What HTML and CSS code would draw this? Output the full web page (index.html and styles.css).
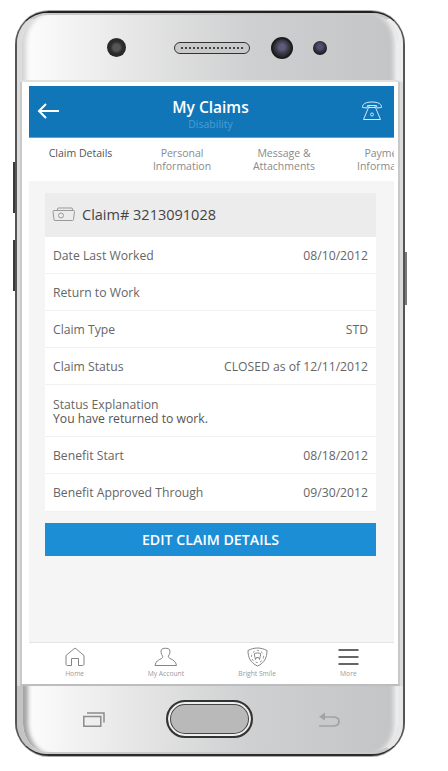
FILE: index.html
```html
<!DOCTYPE html>
<html lang="en">
<head>
<meta charset="utf-8">
<title>My Claims</title>
<link rel="stylesheet" href="styles.css">
</head>
<body>
<div class="phone">
  <span class="side side-l1"></span>
  <span class="side side-l2"></span>
  <span class="side side-r"></span>
  <div class="bezel bezel-top">
    <span class="cam-left"></span>
    <span class="speaker"><i></i></span>
    <span class="cam-main"></span>
    <span class="cam-small"></span>
  </div>
  <div class="screen">
    <header class="appbar">
      <svg class="back" width="22" height="16" viewBox="0 0 22 16"><path d="M22 8H2M9 1 2 8l7 7" fill="none" stroke="#fff" stroke-width="2"/></svg>
      <div class="titles">
        <div class="title">My Claims</div>
        <div class="subtitle">Disability</div>
      </div>
      <svg class="phone-icon" width="22" height="20" viewBox="0 0 22 20" fill="none" stroke="#d5e8f5" stroke-width="1"><path d="M1.500 6.500C1 3 5 1 11 1s10 2 9.500 5.500l-4.500.5-.5-2.500h-9L6 7z"/><path d="M7.500 6.500 2.500 18.500h17l-5-12zM8 5v2M14 5v2"/><circle cx="11" cy="13.500" r="1.500"/></svg>
    </header>
    <nav class="tabs">
      <div class="tab tab-1">Claim Details</div>
      <div class="tab tab-2">Personal<br>Information</div>
      <div class="tab tab-3">Message &amp;<br>Attachments</div>
      <div class="tab tab-4">Payment<br>Information</div>
    </nav>
    <main class="content">
      <div class="claim-head">
        <svg width="23" height="14" viewBox="0 0 23 14" fill="none" stroke="#999" stroke-width="1"><path d="M2 3.500h19.500a1 1 0 0 1 1 1l-1 8a1 1 0 0 1-1 1H3a1 1 0 0 1-1-1l-1-8a1 1 0 0 1 1-1zM5 3.500l1-2.500h14l1 2.500"/><circle cx="9" cy="8.500" r="2.500"/></svg>
        <span>Claim# 3213091028</span>
      </div>
      <div class="row"><span>Date Last Worked</span><span>08/10/2012</span></div>
      <div class="row"><span>Return to Work</span></div>
      <div class="row"><span>Claim Type</span><span>STD</span></div>
      <div class="row"><span>Claim Status</span><span>CLOSED as of 12/11/2012</span></div>
      <div class="row row-tall"><div class="stack"><span>Status Explanation</span><span class="dark">You have returned to work.</span></div></div>
      <div class="row"><span>Benefit Start</span><span>08/18/2012</span></div>
      <div class="row row-last"><span>Benefit Approved Through</span><span>09/30/2012</span></div>
      <button class="edit" type="button">EDIT CLAIM DETAILS</button>
    </main>
    <footer class="botnav">
      <div class="nav-item">
        <svg width="20" height="20" viewBox="0 0 20 20" fill="none" stroke="#777" stroke-width=".9"><path d="M1 17c0 1 .5 1.500 1.500 1.500h4v-7h7v7h4c1 0 1.500-.5 1.500-1.500V8.500L10 1 1 8.500z"/></svg>
        <span>Home</span>
      </div>
      <div class="nav-item">
        <svg width="23" height="20" viewBox="0 0 23 20" fill="none" stroke="#777" stroke-width=".9"><path d="M7.500 2.500C8.500.8 14.500.8 15.500 2.500c1 1.800.3 4.500-1 6.500-.6 1 .5 2 1.500 2.500 3 1.300 6 3 6.500 7H1c.5-4 3.500-5.700 6.500-7C8.500 11 9.100 10 8.500 9 7.200 7 6.500 4.300 7.500 2.500z"/></svg>
        <span>My Account</span>
      </div>
      <div class="nav-item">
        <svg width="21" height="20" viewBox="0 0 21 20" fill="none" stroke="#777" stroke-width=".9"><path d="M10.500 1C7 1 4 2 1 3.500c0 7 2.500 12.500 9.500 15.500 7-3 9.500-8.500 9.500-15.500C17 2 14 1 10.500 1z"/><circle cx="10.500" cy="9.500" r="6" stroke-dasharray="2 2.500"/><path d="M7.500 6.500c1.500-.7 4.500-.7 6 0 .5 2-.5 3-1 6l-1-2h-2l-1 2c-.5-3-1.500-4-1-6z"/></svg>
        <span>Bright Smile</span>
      </div>
      <div class="nav-item">
        <svg width="21" height="20" viewBox="0 0 21 20" fill="none" stroke="#666" stroke-width="2"><path d="M.5 3h20M.5 10h20M.5 17h20"/></svg>
        <span>More</span>
      </div>
    </footer>
  </div>
  <div class="bezel bezel-bottom">
    <svg width="22" height="15" viewBox="0 0 22 15" fill="none" stroke="#8c8c8c" stroke-width="1.500"><path d="M.8 4.500h17v9.700H.8zM4 1h17v9.500"/></svg>
    <span class="home-btn"></span>
    <svg width="24" height="16" viewBox="0 0 24 16" fill="none" stroke="#a2a2a2" stroke-width="1.700"><path d="M2 15h14c3.500 0 6-1.500 6-4.500S19.500 6 16 6H7"/><path d="M8 1.500 2 5.800l6 3.700z" fill="#a2a2a2" stroke="none"/></svg>
  </div>
</div>
</body>
</html>
```
FILE: styles.css
```css
* { box-sizing: border-box; }
html, body { margin: 0; height: 100%; background: #fff; overflow: hidden; }
body { font-family: "Open Sans", "Noto Sans", sans-serif; padding: 11px 43px 0 15px; }
.phone {
  position: relative;
  width: 390px;
  height: 745px;
  display: flex;
  flex-direction: column;
  border: 2px solid #2b2b2b;
  border-top-color: #222;
  border-left-color: #555;
  border-right-color: #555;
  border-radius: 34px;
  background: #dcdcdc;
  box-shadow: 0 -1px 0 #aaa, 0 1px 0 #aaa;
}
.side { position: absolute; width: 2px; background: #3a3a3a; }
.side-l1 { left: -4px; top: 149px; height: 51px; }
.side-l2 { left: -4px; top: 227px; height: 51px; }
.side-r { right: -4px; top: 239px; height: 53px; background: #777; }
.bezel {
  display: flex;
  align-items: center;
  background: linear-gradient(90deg, #fdfdfd 0%, #e6e6e6 30%, #cfd0d1 60%, #c3c4c5 100%);
}
.bezel-top {
  height: 69px;
  flex: none;
  border-radius: 30px 30px 0 0;
  padding: 0 0 0 85px;
  border-left: 5px solid #dcdcdc;
  border-right: 5px solid #ededed;
  border-bottom: 2px solid #e0e0e0;
  border-top: 2px solid #c9c9c9;
  box-shadow: inset 9px 0 5px -5px #d2d2d2, inset -9px 0 5px -5px #f2f2f2;
}
.cam-left { width: 19px; height: 19px; border-radius: 50%; background: radial-gradient(circle, #555 0 25%, #2d2d2d 45%, #1f1f1f 100%); }
.speaker {
  width: 76px; height: 12px; margin-left: 48px;
  border: 1.500px solid #333; border-radius: 6px;
  background: #c9c9c9; display: flex; align-items: center; padding: 0 6px;
}
.speaker i { display: block; width: 100%; border-top: 2px dotted #444; }
.cam-main { width: 22px; height: 22px; margin-left: 21px; border-radius: 50%; border: 2px solid #1c1c1c; background: radial-gradient(circle at 50% 45%, #5f5a78 0 20%, #34323f 55%, #1d1d22 100%); }
.cam-small { width: 14px; height: 14px; margin-left: 20px; border-radius: 50%; background: radial-gradient(circle at 50% 40%, #50506a 0 20%, #1e1e2a 65%); }
.screen {
  flex: none;
  height: 604px;
  display: flex;
  flex-direction: column;
  background: #fff;
  padding: 4px 4px 2px 7px;
  border-left: 2px solid #c9c9c9;
  border-right: 2px solid #c9c9c9;
  border-bottom: 2px solid #bdbdbd;
  margin: 0 3px;
}
.appbar {
  height: 52px;
  flex: none;
  display: flex;
  align-items: center;
  justify-content: space-between;
  padding: 0 11px 2px 8px;
  background: #1176b8;
  border-bottom: 1px solid #5aa5d3;
}
.titles { text-align: center; color: #fff; padding-left: 1px; }
.title { font-size: 15.500px; font-weight: 600; line-height: 20px; margin-top: 5px; }
.subtitle { font-size: 10.500px; line-height: 12px; margin-top: 1px; color: #4c9ed3; }
.tabs { height: 43px; flex: none; display: flex; overflow: hidden; background: #fff; }
.tab {
  flex: none;
  font-size: 10.500px;
  line-height: 13px;
  color: #8a8a8a;
  text-align: center;
  padding-top: 9px;
  white-space: nowrap;
}
.tab-1 { width: 103px; color: #555; }
.tab-2 { width: 100px; }
.tab-3 { width: 104px; }
.tab-4 { width: 79px; padding-left: 21px; }
.content {
  flex: 1;
  background: #f5f5f5;
  padding: 12px 18px 0 16px;
  display: flex;
  flex-direction: column;
}
.claim-head {
  height: 44px;
  flex: none;
  background: #ececec;
  display: flex;
  align-items: center;
  gap: 7px;
  padding: 0 7px 2px;
  font-size: 14.500px;
  color: #444;
}
.row {
  height: 37px;
  flex: none;
  display: flex;
  align-items: center;
  justify-content: space-between;
  padding: 0 8px;
  background: #fff;
  border-bottom: 1px solid #f1f1f1;
  font-size: 12.200px;
  color: #666;
  white-space: nowrap;
}
.row-tall { height: 52px; line-height: 14px; padding-top: 2px; }
.stack { display: flex; flex-direction: column; }
.dark { color: #555; }
.row-last { height: 38px; }
.edit {
  height: 33px;
  flex: none;
  margin-top: 11px;
  border: 0;
  background: #1b8ed6;
  color: #fff;
  font: 600 14.200px "Open Sans", sans-serif;
  padding: 0;
}
.botnav {
  height: 40px;
  flex: none;
  display: flex;
  background: #fff;
  border-top: 1px solid #e4e4e4;
  padding: 4px 0 0;
}
.nav-item {
  flex: 1;
  display: flex;
  flex-direction: column;
  align-items: center;
  gap: 2px;
  font-size: 6.700px;
  line-height: 9px;
  color: #999;
}
.bezel-bottom {
  flex: 1;
  border-radius: 0 0 30px 30px;
  border-left: 6px solid #c4c4c4;
  border-right: 5px solid #e8e8e8;
  border-bottom: 2px solid #c9c9c9;
  padding: 0 0 0 60px;
  box-shadow: inset 9px 0 4px -4px #a4a4a4, inset -9px 0 5px -5px #f2f2f2;
}
.home-btn {
  width: 87px; height: 38px; margin-left: 61px; margin-right: 64px;
  border-radius: 19px;
  border: 2px solid #333;
  box-shadow: inset 0 0 0 2px #eee, inset 0 0 0 3px #444;
  background: #b9b9b9;
}
```
